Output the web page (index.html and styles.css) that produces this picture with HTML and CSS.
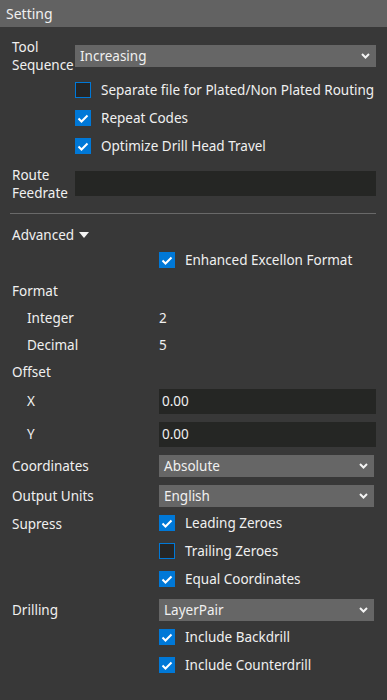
FILE: index.html
```html
<!DOCTYPE html>
<html lang="en">
<head>
  <meta charset="UTF-8" />
  <meta name="viewport" content="width=device-width, initial-scale=1.0" />
  <title>Setting</title>
  <link rel="stylesheet" href="styles.css">
</head>
<body>
  <div class="panel">
    <div class="panel-title">Setting</div>

    <div class="form">
      <div class="row row-tool">
        <div class="label label-wide">Tool<br>Sequence</div>
        <div class="select select-top">
          <span>Increasing</span>
          <svg class="chevron" width="9" height="6" viewBox="0 0 9 6"><polyline points="1,1 4.5,4.5 8,1" /></svg>
        </div>
      </div>

      <div class="checks checks-top">
        <div class="check-row"><span class="box"></span><span>Separate file for Plated/Non Plated Routing</span></div>
        <div class="check-row"><span class="box on"><svg width="16" height="16" viewBox="0 0 16 16"><polyline points="3.5,8.5 6.5,11.5 12.5,5.5" /></svg></span><span>Repeat Codes</span></div>
        <div class="check-row"><span class="box on"><svg width="16" height="16" viewBox="0 0 16 16"><polyline points="3.5,8.5 6.5,11.5 12.5,5.5" /></svg></span><span>Optimize Drill Head Travel</span></div>
      </div>

      <div class="row row-feed">
        <div class="label label-wide">Route<br>Feedrate</div>
        <div class="input input-feed"></div>
      </div>

      <div class="divider"></div>

      <div class="advanced">Advanced <svg width="10" height="6" viewBox="0 0 10 6"><polygon points="0,0 10,0 5,6" /></svg></div>

      <div class="grid">
        <div></div>
        <div class="check-row"><span class="box on"><svg width="16" height="16" viewBox="0 0 16 16"><polyline points="3.5,8.5 6.5,11.5 12.5,5.5" /></svg></span><span>Enhanced Excellon Format</span></div>

        <div class="label span2 gap-format">Format</div>
        <div class="label sub">Integer</div><div class="label">2</div>
        <div class="label sub">Decimal</div><div class="label">5</div>
        <div class="label span2 offset">Offset</div>

        <div class="label sub">X</div><div class="input">0.00</div>
        <div class="label sub">Y</div><div class="input">0.00</div>

        <div class="label">Coordinates</div>
        <div class="select select-low"><span>Absolute</span><svg class="chevron" width="9" height="6" viewBox="0 0 9 6"><polyline points="1,1 4.5,4.5 8,1" /></svg></div>

        <div class="label">Output Units</div>
        <div class="select select-low"><span>English</span><svg class="chevron" width="9" height="6" viewBox="0 0 9 6"><polyline points="1,1 4.5,4.5 8,1" /></svg></div>

        <div class="label label-top">Supress</div>
        <div class="checks">
          <div class="check-row"><span class="box on"><svg width="16" height="16" viewBox="0 0 16 16"><polyline points="3.5,8.5 6.5,11.5 12.5,5.5" /></svg></span><span>Leading Zeroes</span></div>
          <div class="check-row"><span class="box"></span><span>Trailing Zeroes</span></div>
          <div class="check-row"><span class="box on"><svg width="16" height="16" viewBox="0 0 16 16"><polyline points="3.5,8.5 6.5,11.5 12.5,5.5" /></svg></span><span>Equal Coordinates</span></div>
        </div>

        <div class="label gap12">Drilling</div>
        <div class="select select-low gap12"><span>LayerPair</span><svg class="chevron" width="9" height="6" viewBox="0 0 9 6"><polyline points="1,1 4.5,4.5 8,1" /></svg></div>

        <div></div>
        <div class="checks">
          <div class="check-row"><span class="box on"><svg width="16" height="16" viewBox="0 0 16 16"><polyline points="3.5,8.5 6.5,11.5 12.5,5.5" /></svg></span><span>Include Backdrill</span></div>
          <div class="check-row"><span class="box on"><svg width="16" height="16" viewBox="0 0 16 16"><polyline points="3.5,8.5 6.5,11.5 12.5,5.5" /></svg></span><span>Include Counterdrill</span></div>
        </div>
      </div>
    </div>
  </div>
</body>
</html>
```

FILE: styles.css
```css
body {
  margin: 0;
  background-color: #383838;
  color: #f0f0f0;
  font-family: 'Noto Sans', 'Open Sans', sans-serif;
  font-size: 13.5px;
  height: 700px;
  overflow: hidden;
}

.panel-title {
  height: 27px;
  line-height: 27px;
  background-color: #626262;
  padding-left: 6px;
  font-size: 14px;
}

.form {
  padding: 0 11px 0 12px;
}

.row {
  display: flex;
  align-items: flex-start;
}

.label {
  line-height: 18px;
  white-space: nowrap;
}

.label-wide {
  width: 63px;
  flex: none;
}

.row-tool {
  margin-top: 11px;
}

.select {
  display: flex;
  align-items: center;
  justify-content: space-between;
  height: 22px;
  background-color: #666666;
  padding: 0 6px 0 5px;
  box-sizing: border-box;
}

.select-top {
  flex: 1;
  margin-top: 7px;
}

.select-low {
  margin-right: 2px;
}

.chevron polyline {
  fill: none;
  stroke: #f4f4f4;
  stroke-width: 2;
}

.checks {
  display: flex;
  flex-direction: column;
  gap: 12px;
}

.checks-top {
  margin: 8px 0 0 63px;
}

.check-row {
  display: flex;
  align-items: center;
  gap: 10px;
  height: 16px;
  white-space: nowrap;
}

.box {
  width: 16px;
  height: 16px;
  box-sizing: border-box;
  border: 1px solid #0078d7;
  background-color: #252525;
  flex: none;
}

.box.on {
  background-color: #0078d7;
}

.box svg {
  display: block;
  margin: -1px;
}

.box polyline {
  fill: none;
  stroke: #ffffff;
  stroke-width: 2;
}

.row-feed {
  margin-top: 12px;
}

.input {
  height: 25px;
  line-height: 25px;
  background-color: #252624;
  padding-left: 3px;
  box-sizing: border-box;
}

.input-feed {
  flex: 1;
  margin-top: 5px;
}

.divider {
  height: 1px;
  background-color: #696969;
  margin: 11px 0 0 -2px;
}

.advanced {
  margin-top: 12px;
  line-height: 18px;
  display: flex;
  align-items: center;
  gap: 5px;
}

.advanced polygon {
  fill: #f4f4f4;
}

.grid {
  display: grid;
  grid-template-columns: 147px 1fr;
  row-gap: 8px;
  align-items: center;
  margin-top: 8px;
}

.grid .label {
  line-height: 19px;
}

.span2 {
  grid-column: 1 / 3;
}

.sub {
  padding-left: 15px;
}

.gap-format {
  margin-top: 6px;
}

.offset {
  margin-bottom: -1px;
}

.gap12 {
  margin-top: 4px;
}

.label-top {
  align-self: start;
  margin-top: 0;
}
```
